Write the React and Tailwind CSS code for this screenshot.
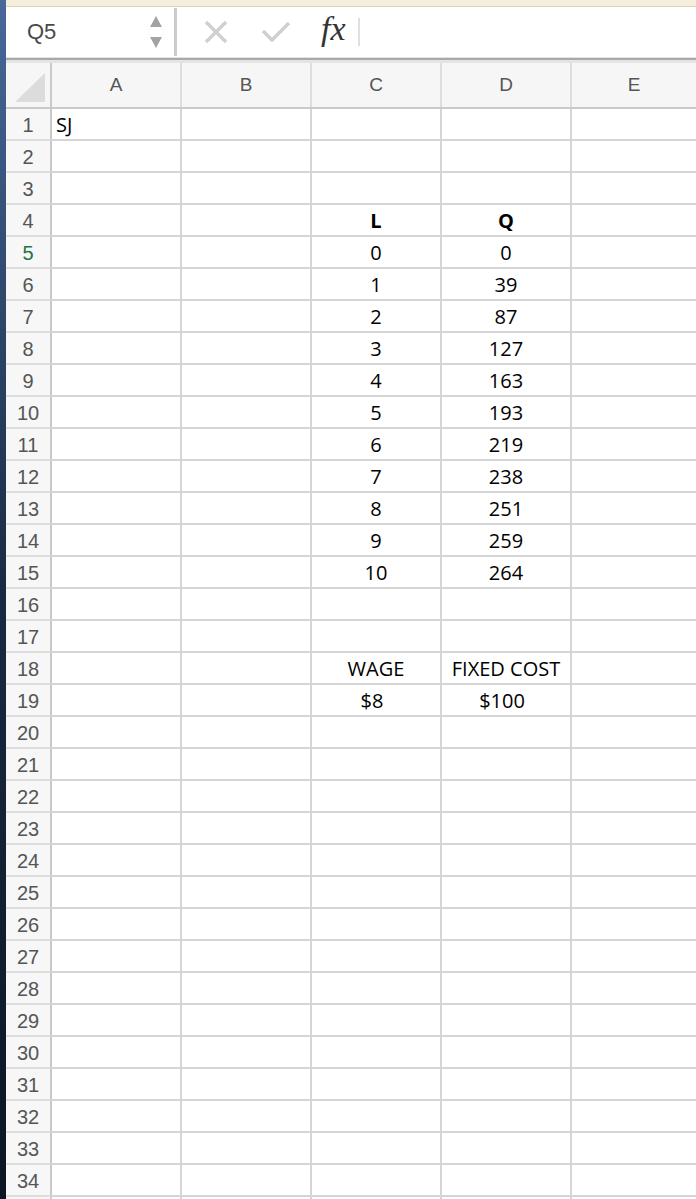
import React from 'react';

const cols = ['A', 'B', 'C', 'D', 'E'];

const cells = {
  1: { A: { v: 'SJ', align: 'left' } },
  4: { C: { v: 'L', bold: true }, D: { v: 'Q', bold: true } },
  18: { C: { v: 'WAGE' }, D: { v: 'FIXED COST' } },
  19: { C: { v: '$8', shift: true }, D: { v: '$100', shift: true } },
};

const qs = [0, 39, 87, 127, 163, 193, 219, 238, 251, 259, 264];
qs.forEach((q, i) => {
  cells[5 + i] = { C: { v: String(i) }, D: { v: String(q) } };
});

const rows = Array.from({ length: 35 }, (_, i) => i + 1);

function Cell({ data, last }) {
  let cls = 'h-[32px] border-b-2 border-[#d5d5d5] flex items-center text-[20px] text-black pt-[2px] ';
  if (!last) cls += 'border-r-2 ';
  if (data?.align === 'left') cls += 'justify-start pl-[4px] ';
  else cls += 'justify-center ';
  if (data?.shift) cls += 'pr-[8px] ';
  if (data?.bold) cls += 'font-bold ';
  return <div className={cls}>{data?.v}</div>;
}

export default function App() {
  return (
    <div className="w-[696px] h-[1199px] overflow-hidden flex bg-white" style={{ fontFamily: '"Open Sans", "Liberation Sans", sans-serif' }}>
      <div className="w-[6px] shrink-0 bg-gradient-to-b from-[#48699a] via-[#182a42] to-[#0b1524]" />

      <div className="flex-1 flex flex-col min-w-0">
        <div className="h-[7px] shrink-0 bg-[#f4eedb] border-b border-[#d9d1b9]" />

        {/* formula bar */}
        <div className="h-[51px] shrink-0 flex bg-white border-b border-[#e2e2e2]">
          <div className="w-[168px] flex items-center justify-between pl-[21px] pr-[12px]">
            <span className="text-[22px] text-[#4a4a4a] pb-[2px]" style={{ fontFamily: '"Liberation Sans", sans-serif' }}>Q5</span>
            <div className="flex flex-col gap-[10px]">
              <svg width="12" height="11" viewBox="0 0 12 11"><polygon points="6,0 12,11 0,11" fill="#a3a3a3" /></svg>
              <svg width="12" height="11" viewBox="0 0 12 11"><polygon points="0,0 12,0 6,11" fill="#a3a3a3" /></svg>
            </div>
          </div>
          <div className="w-[3px] bg-[#cccccc] my-[1px]" />
          <div className="flex-1 flex items-center">
            <svg className="ml-[27px]" width="24" height="24" viewBox="0 0 24 24">
              <path d="M2 2 L22 22 M22 2 L2 22" stroke="#d0d0d0" strokeWidth="3.4" fill="none" />
            </svg>
            <svg className="ml-[33px]" width="30" height="24" viewBox="0 0 30 24">
              <path d="M2 11 L11 20 L28 3" stroke="#d0d0d0" strokeWidth="3.4" fill="none" />
            </svg>
            <span className="ml-[30px] text-[34px] italic text-[#333] leading-none pb-[6px]" style={{ fontFamily: '"Liberation Serif", serif' }}>fx</span>
            <div className="ml-[12px] w-[2px] h-[28px] bg-[#e0e0e0]" />
          </div>
        </div>

        <div className="h-[2px] shrink-0 bg-[#a9a9a9]" />
        <div className="h-[3px] shrink-0 bg-[#e4e4e4]" />

        {/* column header */}
        <div className="grid shrink-0 grid-cols-[46px_130px_130px_130px_130px_1fr] h-[46px] bg-[#f6f6f6] border-b-2 border-[#c9c9c9]">
          <div className="border-r-2 border-[#c9c9c9] flex items-end justify-end pr-[5px] pb-[5px]">
            <svg width="30" height="29" viewBox="0 0 30 29"><polygon points="30,0 30,29 0,29" fill="#dcdcdc" /></svg>
          </div>
          {cols.map((c, i) => (
            <div
              key={c}
              className={'flex items-center justify-center text-[19px] text-[#555] ' + (i < 4 ? 'border-r-2 border-[#dedede]' : '')}
              style={{ fontFamily: '"Liberation Sans", sans-serif' }}
            >
              {c}
            </div>
          ))}
        </div>

        {/* rows */}
        {rows.map((r) => (
          <div key={r} className="grid grid-cols-[46px_130px_130px_130px_130px_1fr] shrink-0">
            <div
              className={'h-[32px] bg-[#f7f7f7] border-r-2 border-[#c9c9c9] border-b-2 border-b-[#dddddd] flex items-center justify-center text-[20px] pt-[2px] ' + (r === 5 ? 'text-[#217346]' : 'text-[#555]')}
              style={{ fontFamily: '"Liberation Sans", sans-serif' }}
            >
              {r < 35 ? r : ''}
            </div>
            {cols.map((c, i) => (
              <Cell key={c} data={cells[r]?.[c]} last={i === 4} />
            ))}
          </div>
        ))}
      </div>
    </div>
  );
}
